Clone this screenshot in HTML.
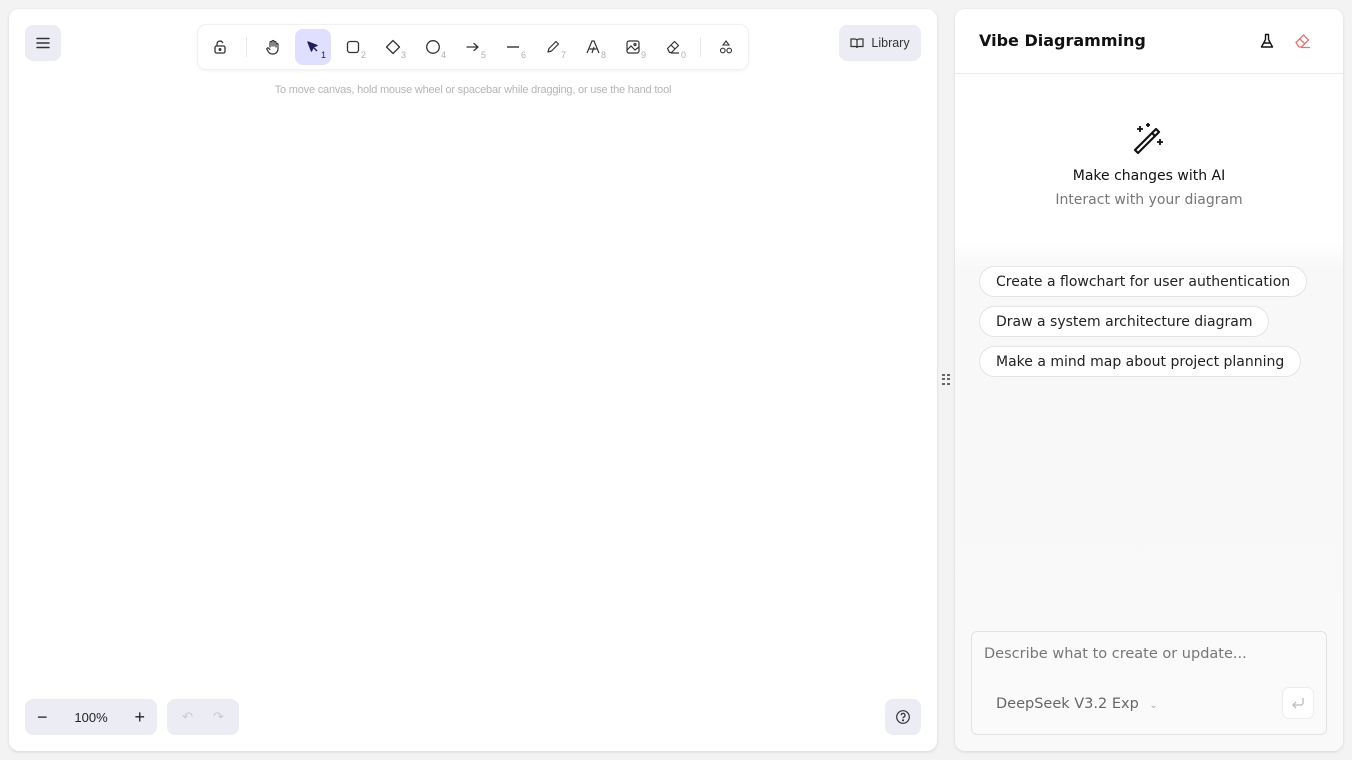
<!DOCTYPE html>
<html><head><meta charset="utf-8"><style>
*{box-sizing:border-box;margin:0;padding:0}
body{width:1352px;height:760px;background:#f3f3f4;position:relative;overflow:hidden;font-family:"Liberation Sans",sans-serif}
.canvas{position:absolute;left:9px;top:9px;width:928px;height:742px;background:#fff;border-radius:10px;box-shadow:0 1px 3px rgba(0,0,0,.12)}
.btn{position:absolute;background:#ececf4;border-radius:8px;display:flex;align-items:center;justify-content:center}
.toolbar{position:absolute;left:198px;top:25px;width:550px;height:44px;background:#fff;border-radius:8px;box-shadow:0 0 0 1px #f0f0f0,0 1px 4px rgba(0,0,0,.08)}
.tool{position:absolute;top:4px;width:36px;height:36px;display:flex;align-items:center;justify-content:center;border-radius:8px}
.tool sub{position:absolute;right:5px;bottom:5px;font-size:9px;color:#b0b0b0}
.sep{position:absolute;top:12px;width:1px;height:20px;background:#e8e8e8}
.hint{position:absolute;left:0;width:946px;top:84px;text-align:center;font-size:11px;color:#b5b5b5;letter-spacing:-0.2px}
.panel{position:absolute;left:955px;top:9px;width:388px;height:742px;background:linear-gradient(#fff 0,#fff 230px,#f8f8f8 260px,#f9f9f9 100%);border-radius:10px;box-shadow:0 1px 3px rgba(0,0,0,.12);font-family:"DejaVu Sans",sans-serif}
.chip{position:absolute;left:24px;height:31px;border:1px solid #e4e4e4;border-radius:16px;background:#fff;font-size:14px;color:#222;padding:0 16px;line-height:31px;white-space:nowrap}
</style></head><body>
<div class="canvas"></div>
<div class="btn" style="left:25px;top:25px;width:36px;height:36px">
<svg width="14" height="12" viewBox="0 0 14 12"><path d="M1 1.5h12M1 6h12M1 10.5h12" stroke="#333" stroke-width="1.5" stroke-linecap="round"/></svg></div>
<div class="toolbar">
<div class="tool" style="left:4px"><svg width="16" height="16" viewBox="0 0 16 16" fill="none" stroke="#333" stroke-width="1.3"><rect x="3" y="7" width="10" height="7" rx="1.5"/><path d="M5 7V5a3 3 0 0 1 5.8-1"/><circle cx="8" cy="10.5" r=".8" fill="#333"/></svg></div>
<div class="sep" style="left:48px"></div>
<div class="tool" style="left:57px"><svg width="16" height="16" viewBox="0 0 16 16" fill="none" stroke="#333" stroke-width="1.2" stroke-linecap="round"><path d="M5 8V3.5a1 1 0 0 1 2 0V7M7 7V2.5a1 1 0 0 1 2 0V7M9 7V3.5a1 1 0 0 1 2 0V8M11 8V5.5a1 1 0 0 1 2 0V10a5 5 0 0 1-5 5h-.5a5 5 0 0 1-4-2L2 10.5a1 1 0 0 1 1.5-1.3L5 10.5"/></svg></div>
<div class="tool" style="left:97px;background:#e0dfff"><svg width="14" height="14" viewBox="0 0 14 14"><path d="M2 2l9 3.5-3.8 1.3L5.5 11z M7 7l4 4" fill="#1e1e5a" stroke="#1e1e5a" stroke-width="1.4" stroke-linejoin="round"/></svg><sub style="color:#1e1e5a">1</sub></div>
<div class="tool" style="left:137px"><svg width="14" height="14"><rect x="1.5" y="1.5" width="11" height="11" rx="2.5" fill="none" stroke="#333" stroke-width="1.3"/></svg><sub>2</sub></div>
<div class="tool" style="left:177px"><svg width="16" height="16"><path d="M8 1.5L14.5 8 8 14.5 1.5 8z" fill="none" stroke="#333" stroke-width="1.3" stroke-linejoin="round"/></svg><sub>3</sub></div>
<div class="tool" style="left:217px"><svg width="16" height="16"><circle cx="8" cy="8" r="6.3" fill="none" stroke="#333" stroke-width="1.3"/></svg><sub>4</sub></div>
<div class="tool" style="left:257px"><svg width="16" height="16"><path d="M2 8h11M9 4.5L13 8l-4 3.5" fill="none" stroke="#333" stroke-width="1.3" stroke-linecap="round"/></svg><sub>5</sub></div>
<div class="tool" style="left:297px"><svg width="16" height="16"><path d="M2 8h12" stroke="#333" stroke-width="1.4"/></svg><sub>6</sub></div>
<div class="tool" style="left:337px"><svg width="16" height="16"><path d="M3 13l1-3.5L11 2.5l2.5 2.5L6.5 12z" fill="none" stroke="#333" stroke-width="1.2" stroke-linejoin="round"/></svg><sub>7</sub></div>
<div class="tool" style="left:377px"><svg width="16" height="16"><path d="M2 14L7 2h2l5 12M4.5 10h7M7 14L9 8" fill="none" stroke="#333" stroke-width="1.2"/></svg><sub>8</sub></div>
<div class="tool" style="left:417px"><svg width="16" height="16" fill="none" stroke="#333" stroke-width="1.2"><rect x="2" y="2" width="12" height="12" rx="2"/><path d="M2 11l4-4 4 4 4-3"/><circle cx="10" cy="5.5" r="1"/></svg><sub>9</sub></div>
<div class="tool" style="left:457px"><svg width="16" height="16" fill="none" stroke="#333" stroke-width="1.2" stroke-linejoin="round"><path d="M6 14h8M2.5 9.5l7-7 4 4-7 7h-2z M6 6l4 4"/></svg><sub>0</sub></div>
<div class="sep" style="left:502px"></div>
<div class="tool" style="left:510px"><svg width="16" height="16" fill="none" stroke="#333" stroke-width="1.1"><path d="M8 2l3 4H5z"/><circle cx="4.8" cy="11.5" r="2.3"/><circle cx="11.2" cy="11.5" r="2.3"/></svg></div>
</div>
<div class="hint">To move canvas, hold mouse wheel or spacebar while dragging, or use the hand tool</div>
<div class="btn" style="left:839px;top:25px;width:82px;height:36px;font-size:12.5px;color:#333;gap:7px">
<svg width="14" height="12" viewBox="0 0 14 12" fill="none" stroke="#333" stroke-width="1.2"><path d="M1 2h4a2 2 0 0 1 2 2v7a1.5 1.5 0 0 0-1.5-1.5H1zM13 2H9a2 2 0 0 0-2 2v7a1.5 1.5 0 0 1 1.5-1.5H13z"/></svg>Library</div>
<div class="btn" style="left:25px;top:699px;width:132px;height:36px;font-size:13px;color:#222;justify-content:space-between;padding:0 12px">
<span style="font-size:18px">−</span><span>100%</span><span style="font-size:18px">+</span></div>
<div class="btn" style="left:167px;top:699px;width:72px;height:36px;gap:20px;color:#c8c8d0;font-size:13px"><span>↶</span><span>↷</span></div>
<div class="btn" style="left:885px;top:699px;width:36px;height:36px"><svg width="16" height="16" fill="none" stroke="#333" stroke-width="1.2"><circle cx="8" cy="8" r="6.3"/><path d="M6.2 6.3a1.9 1.9 0 1 1 2.5 1.8c-.5.2-.7.6-.7 1.1"/><circle cx="8" cy="11.3" r=".5" fill="#333"/></svg></div>
<div style="position:absolute;left:942px;top:374px;width:8px;height:12px;display:grid;grid-template-columns:3px 3px;gap:1px 2px">
<i style="background:#666;height:2px"></i><i style="background:#666;height:2px"></i><i style="background:#666;height:2px"></i><i style="background:#666;height:2px"></i><i style="background:#666;height:2px"></i><i style="background:#666;height:2px"></i></div>
<div class="panel">
<div style="position:absolute;left:24px;top:22px;font-size:16px;font-weight:bold;color:#111">Vibe Diagramming</div>
<svg style="position:absolute;left:304px;top:24px" width="16" height="16" fill="none" stroke="#111" stroke-width="1.4" stroke-linejoin="round"><path d="M6 1.5h4M6.5 1.5v5L2.5 14h11l-4-7.5v-5M4.5 10h7"/></svg>
<svg style="position:absolute;left:339px;top:24px" width="18" height="16" fill="none" stroke="#e57373" stroke-width="1.3" stroke-linejoin="round"><path d="M7 14.5h9M2 9.5l7.5-7.5 5 5-7 7H5z M6 6l5 5"/></svg>
<div style="position:absolute;left:0;top:64px;width:388px;height:1px;background:#ececec"></div>
<svg style="position:absolute;left:177px;top:112px" width="34" height="34" viewBox="0 0 34 34" fill="none" stroke="#111" stroke-width="2.2" stroke-linejoin="round"><path d="M3 29l21-21 3 3-21 21z M20 12l3 3"/><path d="M8 5v6M5 8h6M28 18v6M25 21h6M16 2v4M14 4h4" stroke-width="1.8"/></svg>
<div style="position:absolute;left:0;width:388px;top:159px;text-align:center;font-size:14px;color:#111">Make changes with AI</div>
<div style="position:absolute;left:0;width:388px;top:183px;text-align:center;font-size:14px;color:#777">Interact with your diagram</div>
<div class="chip" style="top:257px">Create a flowchart for user authentication</div>
<div class="chip" style="top:297px">Draw a system architecture diagram</div>
<div class="chip" style="top:337px">Make a mind map about project planning</div>
<div style="position:absolute;left:16px;top:622px;width:356px;height:104px;border:1px solid #e2e2e2;border-radius:6px;background:#fafafa">
<div style="position:absolute;left:12px;top:14px;font-size:14.5px;color:#777">Describe what to create or update...</div>
<div style="position:absolute;left:24px;top:64px;font-size:14.5px;color:#666">DeepSeek V3.2 Exp <span style="font-size:10px;color:#aaa;margin-left:6px">⌄</span></div>
<div style="position:absolute;left:310px;top:55px;width:32px;height:32px;border:1px solid #ececec;border-radius:7px;background:#fff;display:flex;align-items:center;justify-content:center"><svg width="14" height="12" fill="none" stroke="#bbb" stroke-width="1.3"><path d="M12 1v5a2 2 0 0 1-2 2H2M5 5L2 8l3 3"/></svg></div>
</div>
</div>
</body></html>
